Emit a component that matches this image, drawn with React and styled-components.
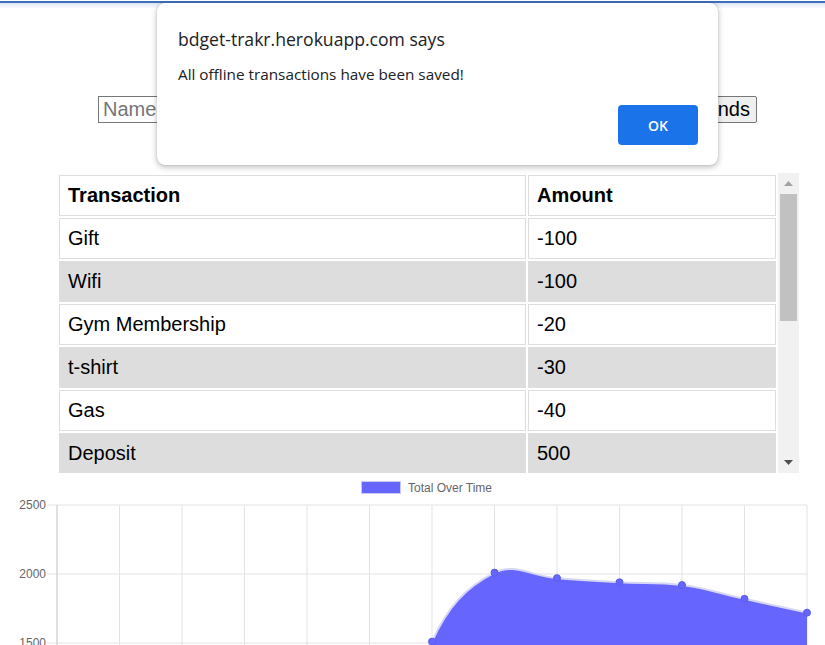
import React from 'react';
import styled, { createGlobalStyle } from 'styled-components';

const GlobalStyle = createGlobalStyle`
  html, body {
    margin: 0;
    padding: 0;
    background: #fff;
    font-family: 'Liberation Sans', Arial, sans-serif;
  }
`;

const transactions = [
  { name: 'Gift', value: -100 },
  { name: 'Wifi', value: -100 },
  { name: 'Gym Membership', value: -20 },
  { name: 't-shirt', value: -30 },
  { name: 'Gas', value: -40 },
  { name: 'Deposit', value: 500 },
  { name: 'Paycheck', value: 1000 },
];

const totals = [0, 0, 0, 0, 0, 0, 1510, 2010, 1970, 1940, 1920, 1820, 1720];

const Page = styled.div`
  position: relative;
  width: 825px;
  min-height: 645px;
`;

const TopStripe = styled.div`
  height: 7px;
  border-top: 1px solid #fff;
  background: linear-gradient(#3d6fbf 0, #3d6fbf 2px, #dce7f4 2px, #f4f8fc 6px);
`;

const Heading = styled.h1`
  margin: 0;
  padding-top: 40px;
  height: 88px;
  box-sizing: border-box;
  text-align: center;
  font-size: 24px;
  color: #000;
`;

const FormRow = styled.div`
  display: flex;
  justify-content: space-between;
  align-items: center;
  margin: 0 68px 0 98px;
  height: 27px;
`;

const TextInput = styled.input`
  width: ${(p) => p.width}px;
  height: 27px;
  box-sizing: border-box;
  font-family: 'Liberation Sans', Arial, sans-serif;
  font-size: 20px;
  padding: 1px 4px;
  border: 1px solid #767676;
  &::placeholder {
    color: #757575;
  }
`;

const FundsButton = styled.button`
  height: 27px;
  box-sizing: border-box;
  font-family: 'Liberation Sans', Arial, sans-serif;
  font-size: 20px;
  padding: 0 6px;
  background: #efefef;
  border: 1px solid #767676;
  border-radius: 2px;
  color: #000;
`;

const TableFrame = styled.div`
  display: flex;
  margin: 50px 0 0 57px;
  width: 742px;
  height: 300px;
`;

const TableViewport = styled.div`
  flex: 1;
  overflow: hidden;
`;

const Table = styled.table`
  width: 100%;
  border-spacing: 2px;
  font-size: 20px;
`;

const HeadCell = styled.th`
  text-align: left;
  font-weight: bold;
  padding: 8px 8px;
  border: 1px solid #dedede;
  width: ${(p) => p.width || 'auto'};
`;

const Cell = styled.td`
  padding: 8px 8px;
  border: 1px solid #dedede;
  background: ${(p) => (p.shaded ? '#dddddd' : '#fff')};
`;

const Scrollbar = styled.div`
  width: 21px;
  background: #f1f1f1;
  display: flex;
  flex-direction: column;
  align-items: center;
`;

const ArrowButton = styled.div`
  height: 21px;
  width: 21px;
  display: flex;
  align-items: center;
  justify-content: center;
  svg {
    fill: ${(p) => (p.active ? '#505050' : '#a3a3a3')};
  }
`;

const Thumb = styled.div`
  width: 17px;
  height: 127px;
  background: #c1c1c1;
`;

const ScrollSpacer = styled.div`
  flex: 1;
`;

const ChartSection = styled.div`
  width: 825px;
`;

const LegendRow = styled.div`
  display: flex;
  justify-content: center;
  align-items: center;
  gap: 7px;
  padding: 8px 0 4px 0;
  margin-left: 28px;
  height: 13px;
`;

const LegendSwatch = styled.span`
  width: 38px;
  height: 11px;
  background: #6666ff;
  border: 1px solid #c9c9f2;
`;

const LegendLabel = styled.span`
  font-size: 12px;
  color: #666;
`;

const Overlay = styled.div`
  position: absolute;
  top: 3px;
  left: 157px;
  width: 561px;
  height: 162px;
  box-sizing: border-box;
  background: #fff;
  border-radius: 8px;
  box-shadow: 0 2px 6px rgba(0, 0, 0, 0.28), 0 0 1px rgba(0, 0, 0, 0.3);
  padding: 26px 20px 20px 21px;
  display: flex;
  flex-direction: column;
  font-family: 'Open Sans', 'Noto Sans', sans-serif;
  color: #202124;
`;

const DialogTitle = styled.div`
  font-size: 17.6px;
  line-height: 20px;
`;

const DialogMessage = styled.div`
  margin-top: 16px;
  font-size: 15.3px;
  line-height: 18px;
`;

const DialogFooter = styled.div`
  margin-top: auto;
  display: flex;
  justify-content: flex-end;
`;

const OkButton = styled.button`
  width: 80px;
  height: 40px;
  border: none;
  border-radius: 4px;
  background: #1a73e8;
  color: #fff;
  font-family: 'Open Sans', 'Noto Sans', sans-serif;
  font-weight: 600;
  font-size: 14px;
`;

// chart geometry (svg starts at page y 498)
const PLOT_LEFT = 57;
const PLOT_RIGHT = 807;
const PLOT_TOP = 7;
const PX_PER_UNIT = 69 / 500;
const yOf = (v) => PLOT_TOP + (2500 - v) * PX_PER_UNIT;
const xOf = (i) => PLOT_LEFT + (i * (PLOT_RIGHT - PLOT_LEFT)) / (totals.length - 1);
const PLOT_BOTTOM = yOf(0);

function buildCurve(values) {
  const pts = values.map((v, i) => ({ x: xOf(i), y: yOf(v) }));
  const t = 0.4;
  const cps = pts.map((p, i) => {
    const prev = pts[i - 1] || p;
    const next = pts[i + 1] || p;
    const d01 = Math.hypot(p.x - prev.x, p.y - prev.y);
    const d12 = Math.hypot(next.x - p.x, next.y - p.y);
    const s01 = d01 / (d01 + d12 || 1);
    const s12 = d12 / (d01 + d12 || 1);
    const fa = t * s01;
    const fb = t * s12;
    const clampY = (y) => Math.max(PLOT_TOP, Math.min(PLOT_BOTTOM, y));
    return {
      prev: { x: p.x - fa * (next.x - prev.x), y: clampY(p.y - fa * (next.y - prev.y)) },
      next: { x: p.x + fb * (next.x - prev.x), y: clampY(p.y + fb * (next.y - prev.y)) },
    };
  });
  let d = `M${pts[0].x},${pts[0].y}`;
  for (let i = 1; i < pts.length; i++) {
    const a = cps[i - 1].next;
    const b = cps[i].prev;
    d += ` C${a.x},${a.y} ${b.x},${b.y} ${pts[i].x},${pts[i].y}`;
  }
  return { d, pts };
}

const ArrowUp = () => (
  <svg width="9" height="5" viewBox="0 0 9 5">
    <path d="M0 5 L4.5 0 L9 5 Z" />
  </svg>
);

const ArrowDown = () => (
  <svg width="9" height="5" viewBox="0 0 9 5">
    <path d="M0 0 L4.5 5 L9 0 Z" />
  </svg>
);

const TotalChart = () => {
  const { d, pts } = buildCurve(totals);
  const ticks = [2500, 2000, 1500, 1000, 500, 0];
  const area = `${d} L${PLOT_RIGHT},${PLOT_BOTTOM} L${PLOT_LEFT},${PLOT_BOTTOM} Z`;
  return (
    <svg width="825" height={PLOT_BOTTOM + 30} style={{ display: 'block' }}>
      {totals.map((_, i) => (
        <line key={i} x1={xOf(i)} x2={xOf(i)} y1={PLOT_TOP} y2={PLOT_BOTTOM + 10} stroke="#e3e3e3" />
      ))}
      {ticks.map((v) => (
        <g key={v}>
          <line x1={PLOT_LEFT - 10} x2={PLOT_RIGHT} y1={yOf(v)} y2={yOf(v)} stroke="#e3e3e3" />
          <text
            x={PLOT_LEFT - 11}
            y={yOf(v) + 4}
            textAnchor="end"
            fontSize="12"
            fill="#666"
            fontFamily="'Liberation Sans', Arial, sans-serif"
          >
            {v}
          </text>
        </g>
      ))}
      <line x1={PLOT_LEFT} x2={PLOT_LEFT} y1={PLOT_TOP} y2={PLOT_BOTTOM + 10} stroke="#cfcfcf" />
      <path d={area} fill="#6666ff" />
      <path d={d} fill="none" stroke="#d6d6f6" strokeWidth="2" />
      {pts.map((p, i) => (
        <circle key={i} cx={p.x} cy={p.y} r="3.5" fill="#6666ff" stroke="#5b5bea" strokeWidth="1" />
      ))}
    </svg>
  );
};

const App = () => {
  return (
    <Page>
      <GlobalStyle />
      <TopStripe />
      <Heading>Budget Tracker</Heading>
      <FormRow>
        <TextInput width={200} placeholder="Name of transaction" />
        <TextInput width={180} type="number" placeholder="Transaction amount" />
        <FundsButton>Add Funds</FundsButton>
        <FundsButton>Subtract Funds</FundsButton>
      </FormRow>
      <TableFrame>
        <TableViewport>
          <Table>
            <thead>
              <tr>
                <HeadCell width="449px">Transaction</HeadCell>
                <HeadCell>Amount</HeadCell>
              </tr>
            </thead>
            <tbody>
              {transactions.map((t, i) => (
                <tr key={t.name}>
                  <Cell shaded={i % 2 === 1}>{t.name}</Cell>
                  <Cell shaded={i % 2 === 1}>{t.value}</Cell>
                </tr>
              ))}
            </tbody>
          </Table>
        </TableViewport>
        <Scrollbar>
          <ArrowButton>
            <ArrowUp />
          </ArrowButton>
          <Thumb />
          <ScrollSpacer />
          <ArrowButton active>
            <ArrowDown />
          </ArrowButton>
        </Scrollbar>
      </TableFrame>
      <ChartSection>
        <LegendRow>
          <LegendSwatch />
          <LegendLabel>Total Over Time</LegendLabel>
        </LegendRow>
        <TotalChart />
      </ChartSection>
      <Overlay>
        <DialogTitle>bdget-trakr.herokuapp.com says</DialogTitle>
        <DialogMessage>All offline transactions have been saved!</DialogMessage>
        <DialogFooter>
          <OkButton>OK</OkButton>
        </DialogFooter>
      </Overlay>
    </Page>
  );
};

export default App;
